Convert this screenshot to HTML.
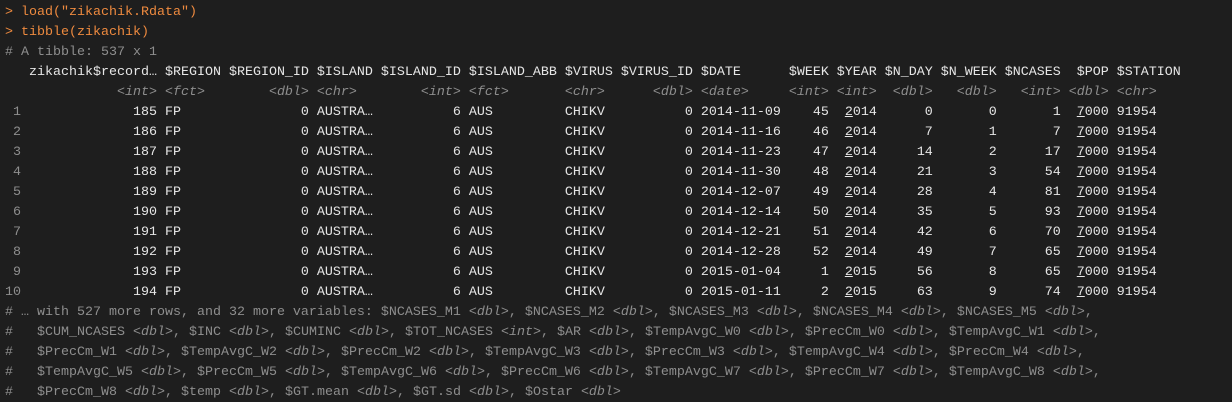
<!DOCTYPE html>
<html><head><meta charset="utf-8"><style>
html,body{margin:0;padding:0;background:#1e1e1e;width:1232px;height:402px;overflow:hidden}
pre{margin:0;padding:3px 0 0 5px;font-family:"Liberation Mono","DejaVu Sans Mono",monospace;font-size:13.33px;line-height:20px;color:#e6e6e6;white-space:pre}
.o{color:#ee8a3f}.g{color:#8e8e8e}.t{color:#8e8e8e;font-style:italic}u{text-decoration:underline}
</style></head><body><pre><span class="o">&gt; load("zikachik.Rdata")</span>
<span class="o">&gt; tibble(zikachik)</span>
<span class="g"># A tibble: 537 x 1</span>
   zikachik$record… $REGION $REGION_ID $ISLAND $ISLAND_ID $ISLAND_ABB $VIRUS $VIRUS_ID $DATE      $WEEK $YEAR $N_DAY $N_WEEK $NCASES  $POP $STATION
<span class="t">              &lt;int&gt; &lt;fct&gt;        &lt;dbl&gt; &lt;chr&gt;        &lt;int&gt; &lt;fct&gt;       &lt;chr&gt;      &lt;dbl&gt; &lt;date&gt;     &lt;int&gt; &lt;int&gt;  &lt;dbl&gt;   &lt;dbl&gt;   &lt;int&gt; &lt;dbl&gt; &lt;chr&gt;</span>
<span class="g"> 1</span>              185 FP               0 AUSTRA…          6 AUS         CHIKV          0 2014-11-09    45  <u>2</u>014      0       0       1  <u>7</u>000 91954
<span class="g"> 2</span>              186 FP               0 AUSTRA…          6 AUS         CHIKV          0 2014-11-16    46  <u>2</u>014      7       1       7  <u>7</u>000 91954
<span class="g"> 3</span>              187 FP               0 AUSTRA…          6 AUS         CHIKV          0 2014-11-23    47  <u>2</u>014     14       2      17  <u>7</u>000 91954
<span class="g"> 4</span>              188 FP               0 AUSTRA…          6 AUS         CHIKV          0 2014-11-30    48  <u>2</u>014     21       3      54  <u>7</u>000 91954
<span class="g"> 5</span>              189 FP               0 AUSTRA…          6 AUS         CHIKV          0 2014-12-07    49  <u>2</u>014     28       4      81  <u>7</u>000 91954
<span class="g"> 6</span>              190 FP               0 AUSTRA…          6 AUS         CHIKV          0 2014-12-14    50  <u>2</u>014     35       5      93  <u>7</u>000 91954
<span class="g"> 7</span>              191 FP               0 AUSTRA…          6 AUS         CHIKV          0 2014-12-21    51  <u>2</u>014     42       6      70  <u>7</u>000 91954
<span class="g"> 8</span>              192 FP               0 AUSTRA…          6 AUS         CHIKV          0 2014-12-28    52  <u>2</u>014     49       7      65  <u>7</u>000 91954
<span class="g"> 9</span>              193 FP               0 AUSTRA…          6 AUS         CHIKV          0 2015-01-04     1  <u>2</u>015     56       8      65  <u>7</u>000 91954
<span class="g">10</span>              194 FP               0 AUSTRA…          6 AUS         CHIKV          0 2015-01-11     2  <u>2</u>015     63       9      74  <u>7</u>000 91954
<span class="g"># … with 527 more rows, and 32 more variables: $NCASES_M1 <i>&lt;dbl&gt;</i>, $NCASES_M2 <i>&lt;dbl&gt;</i>, $NCASES_M3 <i>&lt;dbl&gt;</i>, $NCASES_M4 <i>&lt;dbl&gt;</i>, $NCASES_M5 <i>&lt;dbl&gt;</i>,</span>
<span class="g">#   $CUM_NCASES <i>&lt;dbl&gt;</i>, $INC <i>&lt;dbl&gt;</i>, $CUMINC <i>&lt;dbl&gt;</i>, $TOT_NCASES <i>&lt;int&gt;</i>, $AR <i>&lt;dbl&gt;</i>, $TempAvgC_W0 <i>&lt;dbl&gt;</i>, $PrecCm_W0 <i>&lt;dbl&gt;</i>, $TempAvgC_W1 <i>&lt;dbl&gt;</i>,</span>
<span class="g">#   $PrecCm_W1 <i>&lt;dbl&gt;</i>, $TempAvgC_W2 <i>&lt;dbl&gt;</i>, $PrecCm_W2 <i>&lt;dbl&gt;</i>, $TempAvgC_W3 <i>&lt;dbl&gt;</i>, $PrecCm_W3 <i>&lt;dbl&gt;</i>, $TempAvgC_W4 <i>&lt;dbl&gt;</i>, $PrecCm_W4 <i>&lt;dbl&gt;</i>,</span>
<span class="g">#   $TempAvgC_W5 <i>&lt;dbl&gt;</i>, $PrecCm_W5 <i>&lt;dbl&gt;</i>, $TempAvgC_W6 <i>&lt;dbl&gt;</i>, $PrecCm_W6 <i>&lt;dbl&gt;</i>, $TempAvgC_W7 <i>&lt;dbl&gt;</i>, $PrecCm_W7 <i>&lt;dbl&gt;</i>, $TempAvgC_W8 <i>&lt;dbl&gt;</i>,</span>
<span class="g">#   $PrecCm_W8 <i>&lt;dbl&gt;</i>, $temp <i>&lt;dbl&gt;</i>, $GT.mean <i>&lt;dbl&gt;</i>, $GT.sd <i>&lt;dbl&gt;</i>, $Ostar <i>&lt;dbl&gt;</i></span>
</pre></body></html>
